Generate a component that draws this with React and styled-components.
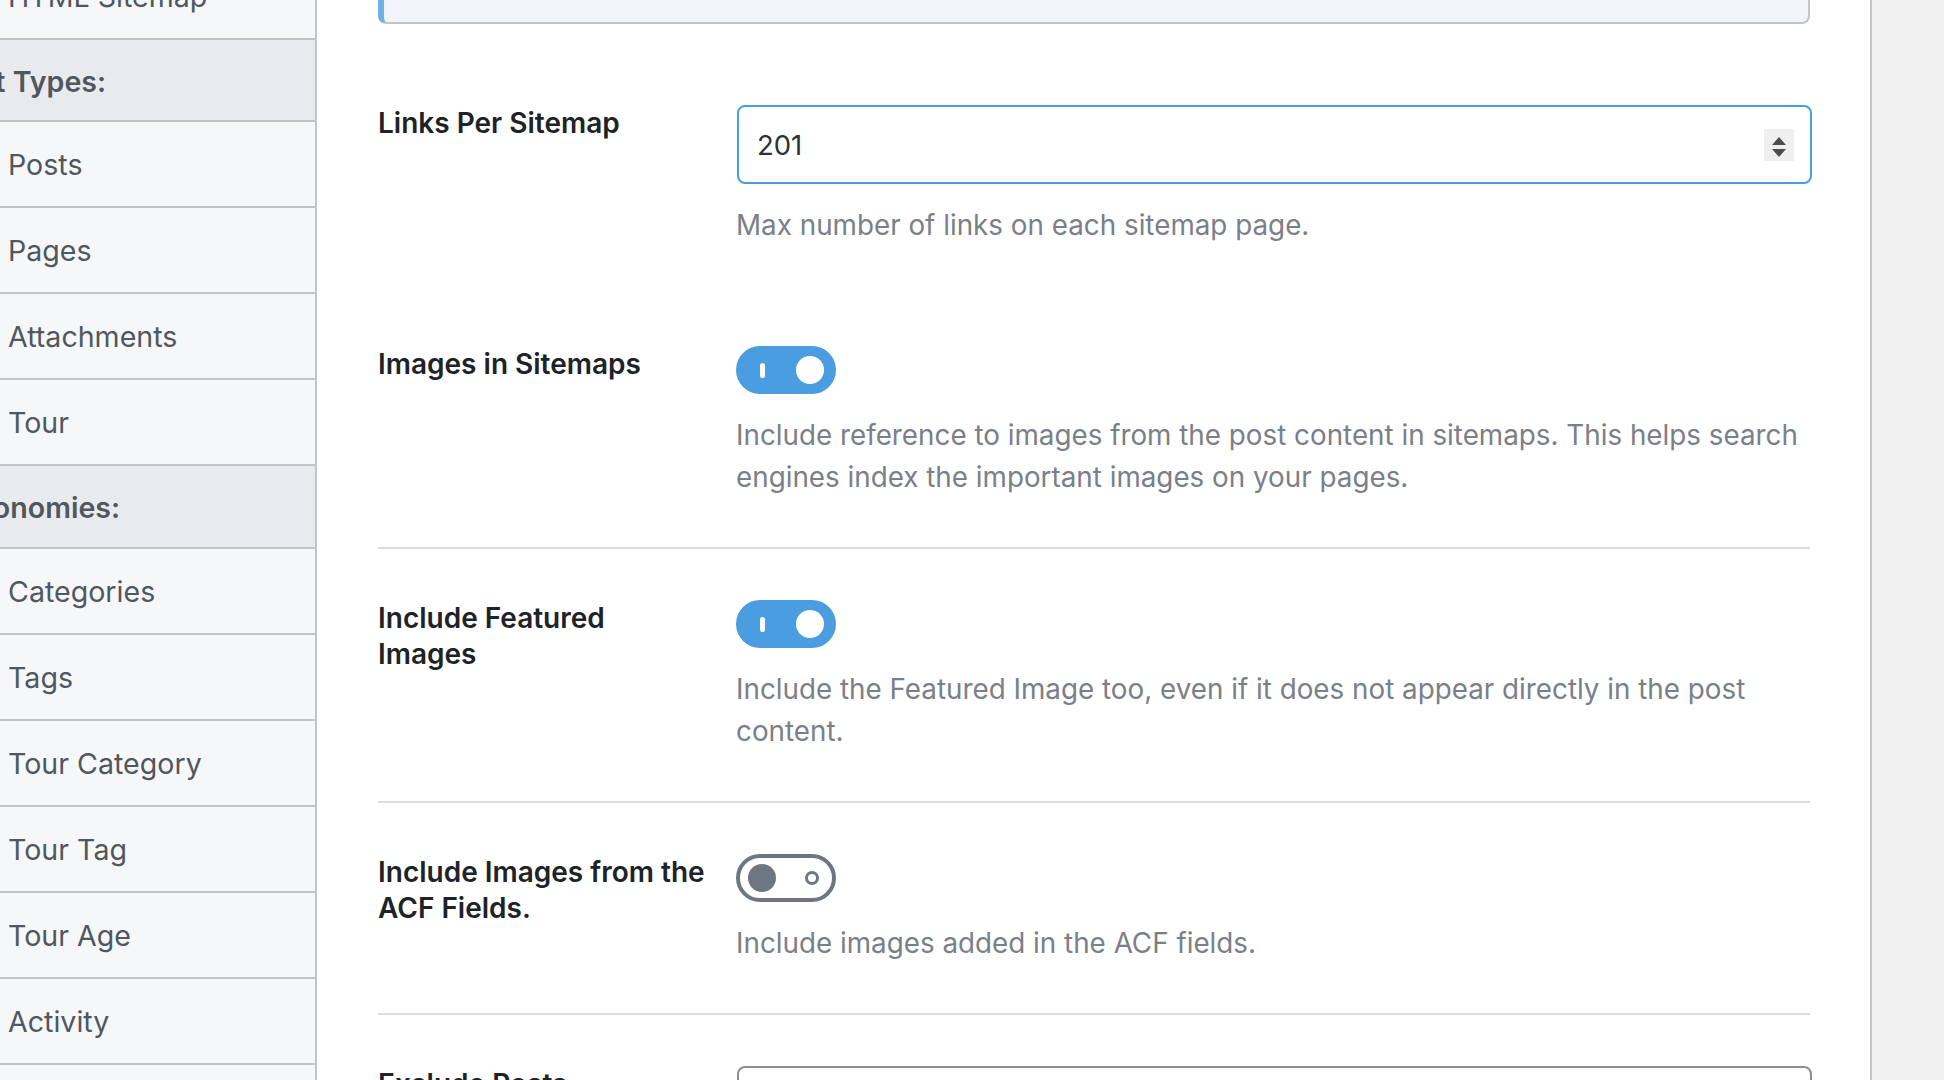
import React from "react";
import styled, { createGlobalStyle } from "styled-components";

const GlobalStyle = createGlobalStyle`
  html, body { margin: 0; padding: 0; }
  body {
    font-family: Inter, "Noto Sans", "Liberation Sans", sans-serif;
    background: #f0f0f1;
    overflow: hidden;
    -webkit-font-smoothing: antialiased;
  }
  * { box-sizing: border-box; }
`;

const Page = styled.div`
  height: 1080px;
  overflow: hidden;
  background: #f0f0f1;
`;

const Frame = styled.div`
  display: flex;
  width: 1872px;
  min-height: 1240px;
  margin-top: -46px;
  background: #fff;
  border-right: 2px solid #c3c4c7;
`;

const Sidebar = styled.nav`
  flex: 0 0 379px;
  margin-left: -62px;
  background: #f6f7f9;
  border-right: 2px solid #c3c4c7;
  display: flex;
  flex-direction: column;
`;

const NavItem = styled.div`
  height: 86px;
  display: flex;
  align-items: center;
  padding-left: 70px;
  border-bottom: 2px solid #c3c4c7;
  font-size: 28.6px;
  color: #50575e;
  white-space: nowrap;
`;

const NavHeader = styled.div`
  height: ${(p) => p.$h}px;
  display: flex;
  align-items: center;
  padding: 2px 0 0 6px;
  background: #e9eaee;
  border-bottom: 2px solid #c3c4c7;
  font-size: 28.6px;
  font-weight: 600;
  color: #50575e;
  white-space: nowrap;
`;

const Content = styled.main`
  flex: 1;
  padding: 0 60px 0 61px;
`;

const Notice = styled.div`
  height: 70px;
  margin-bottom: 30px;
  background: #f0f6fc;
  border: 2px solid #c3c4c7;
  border-top: none;
  border-left: 6px solid #72aee6;
  border-radius: 0 0 8px 8px;
`;

const Row = styled.div`
  display: grid;
  grid-template-columns: 358px 1fr;
  padding: 51px 0 49px;
  border-bottom: ${(p) => (p.$divider ? "2px solid #dcdcde" : "none")};
`;

const Label = styled.div`
  font-size: 28px;
  font-weight: 600;
  line-height: 36px;
  color: #1d2327;
  white-space: nowrap;
`;

const Field = styled.div`
  display: flex;
  flex-direction: column;
  align-items: flex-start;
`;

const Description = styled.p`
  margin: 20px 0 0;
  font-size: 27.8px;
  line-height: 42px;
  color: #7b8088;
`;

const InputWrap = styled.div`
  position: relative;
  width: calc(100% + 1px);
  margin-left: 1px;
  height: 79px;
`;

const NumberInput = styled.input`
  width: 100%;
  height: 100%;
  border: 2px solid ${(p) => (p.$focused ? "#4a9de0" : "#8c8f94")};
  border-radius: 8px;
  padding: 0 17px 0 18px;
  font-family: inherit;
  font-size: 27.5px;
  color: #2c3338;
  background: #fff;
  outline: none;
`;

const Spinner = styled.div`
  position: absolute;
  right: 18px;
  top: 24px;
  width: 30px;
  height: 32px;
  background: #efefef;
  display: flex;
  align-items: center;
  justify-content: center;
`;

const Toggle = styled.span`
  display: flex;
  align-items: center;
  justify-content: space-between;
  width: 100px;
  height: 48px;
  border-radius: 24px;
  background: ${(p) => (p.$on ? "#4a9de0" : "#fff")};
  border: ${(p) => (p.$on ? "none" : "4px solid #6c7781")};
  padding: ${(p) => (p.$on ? "0 12px 0 24px" : "0 13px 0 8px")};
`;

const OnBar = styled.span`
  width: 5px;
  height: 15px;
  border-radius: 3px;
  background: #fff;
`;

const Knob = styled.span`
  width: 28px;
  height: 28px;
  border-radius: 50%;
  background: ${(p) => (p.$on ? "#fff" : "#6c7781")};
`;

const OffRing = styled.span`
  width: 14px;
  height: 14px;
  border-radius: 50%;
  border: 3px solid #6c7781;
`;

const Switch = ({ on }) => (
  <Toggle $on={on} role="switch" aria-checked={on}>
    {on ? (
      <>
        <OnBar />
        <Knob $on />
      </>
    ) : (
      <>
        <Knob />
        <OffRing />
      </>
    )}
  </Toggle>
);

const sidebar = [
  { t: "HTML Sitemap" },
  { t: "Post Types:", h: 82 },
  { t: "Posts" },
  { t: "Pages" },
  { t: "Attachments" },
  { t: "Tour" },
  { t: "Taxonomies:", h: 83 },
  { t: "Categories" },
  { t: "Tags" },
  { t: "Tour Category" },
  { t: "Tour Tag" },
  { t: "Tour Age" },
  { t: "Activity" },
  { t: "Destination" },
];

export default function App() {
  return (
    <Page>
      <GlobalStyle />
      <Frame>
        <Sidebar>
          {sidebar.map((s) =>
            s.h ? (
              <NavHeader key={s.t} $h={s.h}>
                {s.t}
              </NavHeader>
            ) : (
              <NavItem key={s.t}>{s.t}</NavItem>
            )
          )}
        </Sidebar>
        <Content>
          <Notice />
          <Row>
            <Label>Links Per Sitemap</Label>
            <Field>
              <InputWrap>
                <NumberInput $focused type="text" readOnly value="201" />
                <Spinner>
                  <svg width="14" height="24" viewBox="0 0 14 24">
                    <path d="M7 4 L14 12 L0 12 Z" fill="#4d4d4d" />
                    <path d="M0 16 L14 16 L7 24 Z" fill="#4d4d4d" />
                  </svg>
                </Spinner>
              </InputWrap>
              <Description>Max number of links on each sitemap page.</Description>
            </Field>
          </Row>
          <Row $divider>
            <Label>Images in Sitemaps</Label>
            <Field>
              <Switch on />
              <Description>
                Include reference to images from the post content in sitemaps. This helps search
                engines index the important images on your pages.
              </Description>
            </Field>
          </Row>
          <Row $divider>
            <Label>
              Include Featured
              <br />
              Images
            </Label>
            <Field>
              <Switch on />
              <Description>
                Include the Featured Image too, even if it does not appear directly in the post
                content.
              </Description>
            </Field>
          </Row>
          <Row $divider>
            <Label>
              Include Images from the
              <br />
              ACF Fields.
            </Label>
            <Field>
              <Switch on={false} />
              <Description>Include images added in the ACF fields.</Description>
            </Field>
          </Row>
          <Row>
            <Label>Exclude Posts</Label>
            <Field>
              <InputWrap>
                <NumberInput type="text" readOnly value="" />
              </InputWrap>
            </Field>
          </Row>
        </Content>
      </Frame>
    </Page>
  );
}
